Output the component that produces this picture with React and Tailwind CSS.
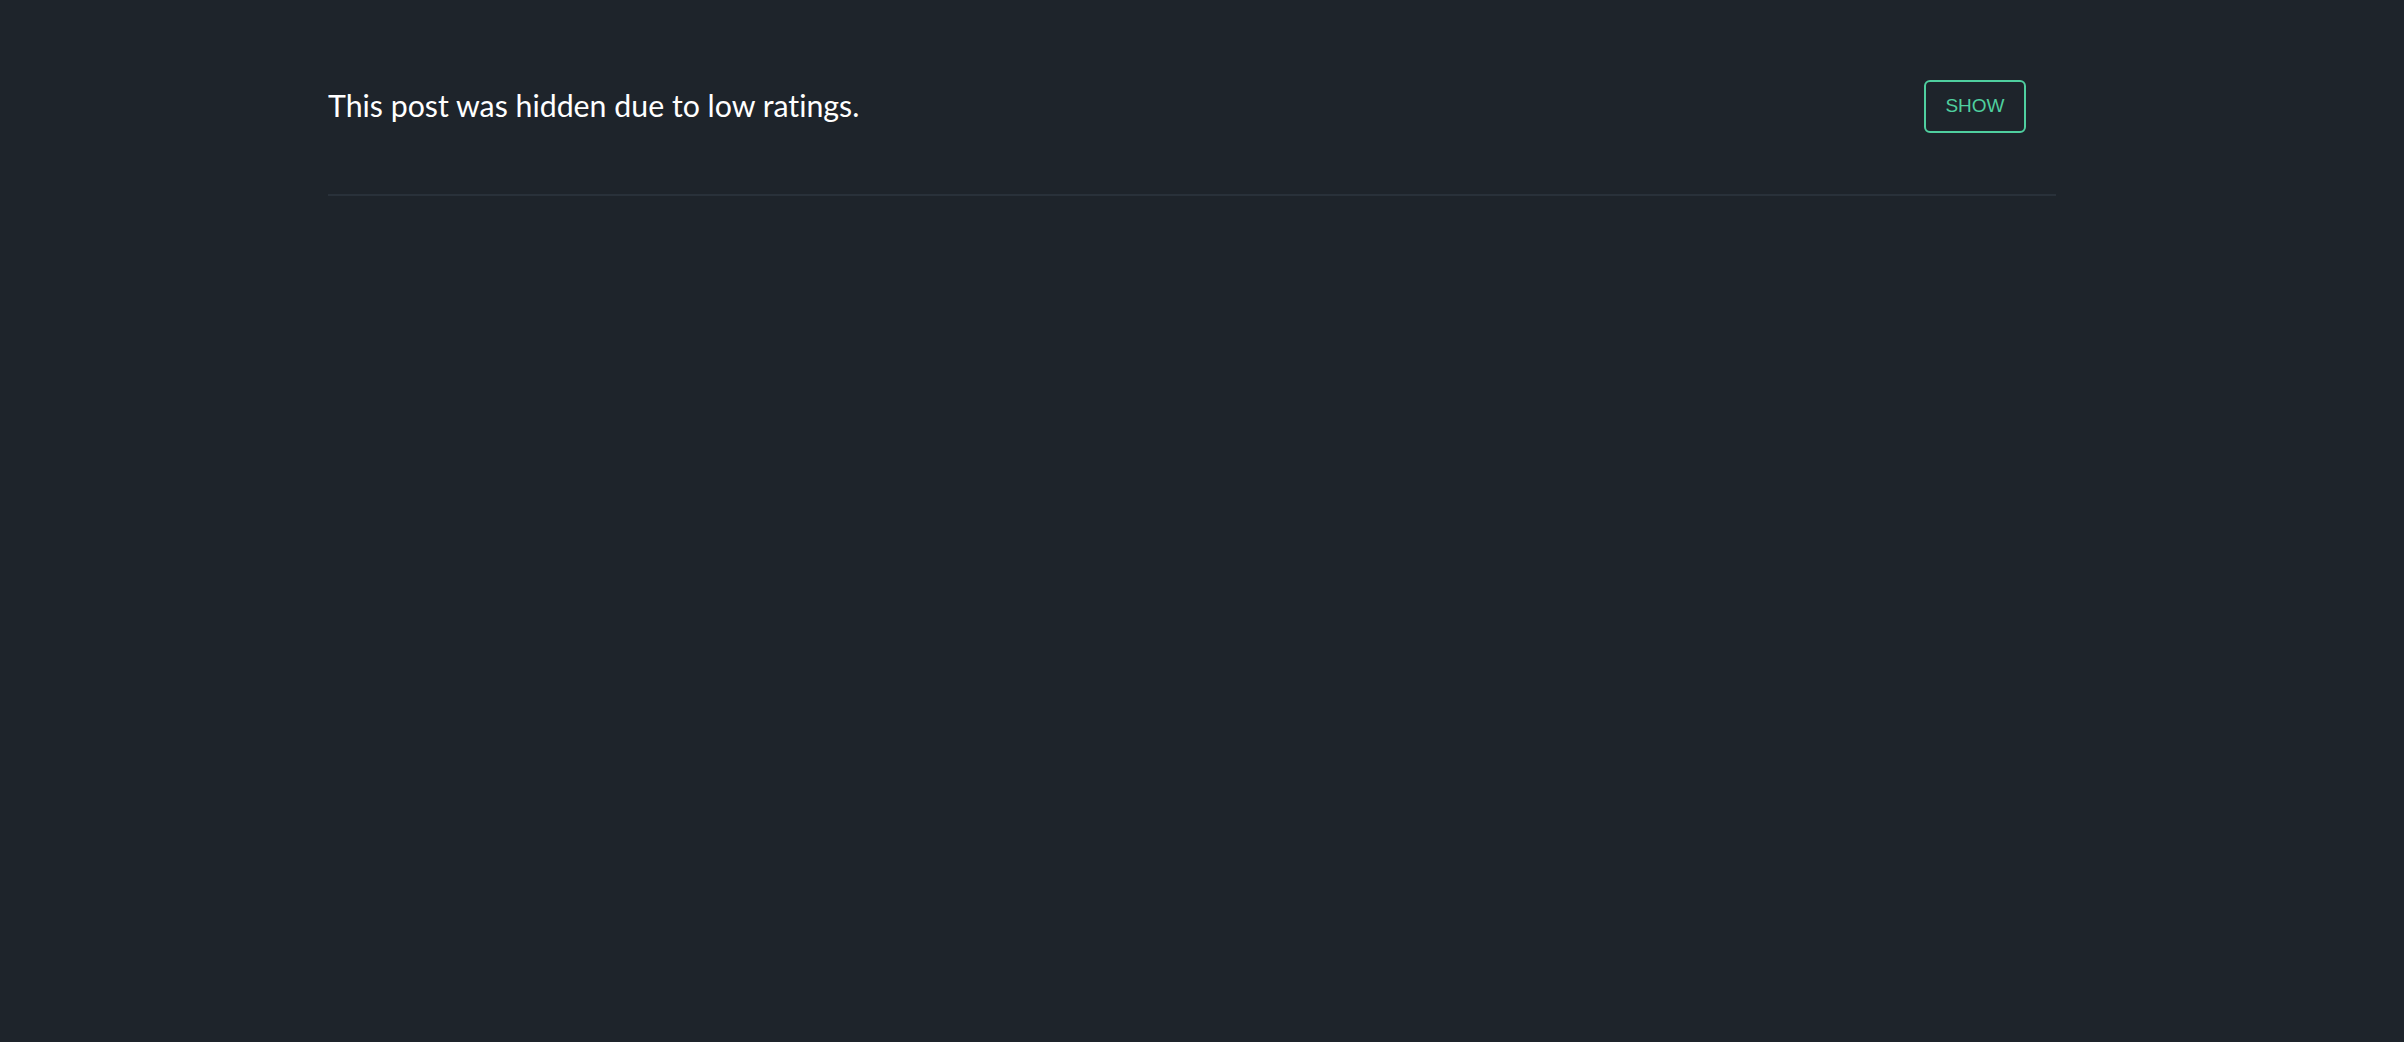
export default function App() {
  return (
    <div className="min-h-[1042px] w-full bg-[#1e242b]">
      <div className="ml-[328px] w-[1728px] pt-[80px]">
        <div className="flex items-center justify-between pr-[30px] pb-[61px] border-b-2 border-[#29313a]">
          <p className="text-[30.3px] leading-[53px] -mt-[3px] text-white font-['Lato',sans-serif] [font-variant-ligatures:none]">
            This post was hidden due to low ratings.
          </p>
          <button className="w-[102px] h-[53px] rounded-[6px] border-2 border-[#4fcf9f] text-[#4fcf9f] text-[19px] font-['Liberation_Sans',Arial,sans-serif]">
            SHOW
          </button>
        </div>
      </div>
    </div>
  );
}
